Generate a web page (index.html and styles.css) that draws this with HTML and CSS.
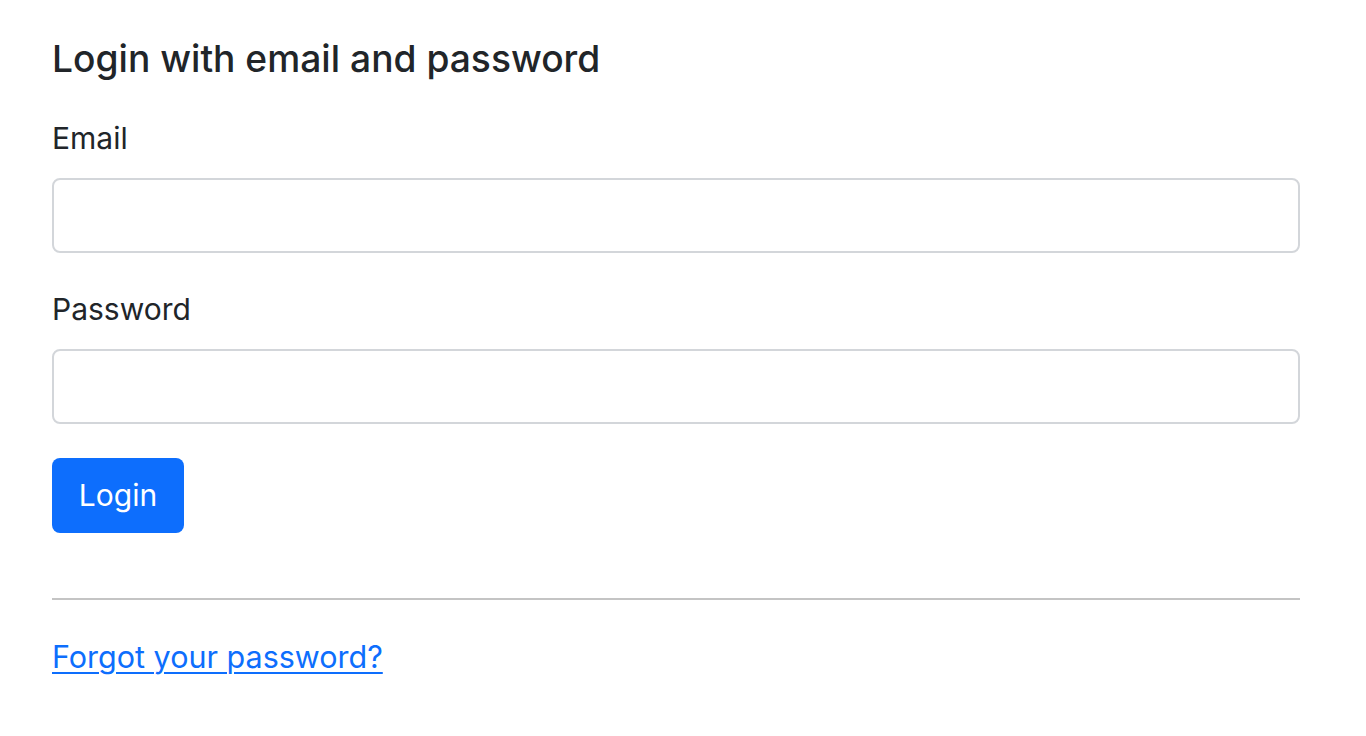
FILE: index.html
```html
<!DOCTYPE html>
<html lang="en">
<head>
<meta charset="utf-8">
<title>Login</title>
<link rel="stylesheet" href="styles.css">
</head>
<body>
<main class="page">
  <h1 class="title">Login with email and password</h1>
  <form class="login-form">
    <div class="field">
      <label class="label" for="email">Email</label>
      <input class="input" id="email" type="email">
    </div>
    <div class="field">
      <label class="label" for="password">Password</label>
      <input class="input" id="password" type="password">
    </div>
    <button class="btn" type="button">Login</button>
  </form>
  <hr class="divider">
  <a class="link" href="#">Forgot your password?</a>
</main>
</body>
</html>
```

FILE: styles.css
```css
* { box-sizing: border-box; }
html, body { margin: 0; padding: 0; background: #fff; }
body {
  font-family: Inter, "Noto Sans", "Liberation Sans", sans-serif;
  color: #212529;
}
.page {
  padding: 36px 66px 0 52px;
}
.title {
  margin: 0;
  font-size: 37.2px;
  font-weight: 500;
  line-height: 45px;
  letter-spacing: 0;
}
.login-form {
  margin-top: 35px;
  display: flex;
  flex-direction: column;
  align-items: flex-start;
}
.field {
  width: 100%;
  margin-bottom: 34px;
}
.label {
  display: block;
  font-size: 30px;
  line-height: 45px;
  margin-bottom: 17px;
}
.input {
  display: block;
  width: 100%;
  height: 75px;
  border: 2px solid #d3d6da;
  border-radius: 8px;
  background: #fff;
  font: inherit;
  font-size: 30px;
  padding: 0 24px;
  margin: 0;
}
.btn {
  width: 132px;
  height: 75px;
  border: 0;
  border-radius: 8px;
  background: #0d6efd;
  color: #fff;
  font-family: inherit;
  font-size: 30px;
  line-height: 45px;
  padding: 0;
  margin: 0;
}
.divider {
  margin: 65px 0 0;
  border: 0;
  border-top: 2px solid #c4c4c4;
  height: 0;
}
.link {
  display: inline-block;
  margin-top: 34px;
  font-size: 30.5px;
  line-height: 45px;
  color: #0d6efd;
  text-decoration: underline;
  text-underline-offset: 4px;
  text-decoration-thickness: 2px;
}
```
